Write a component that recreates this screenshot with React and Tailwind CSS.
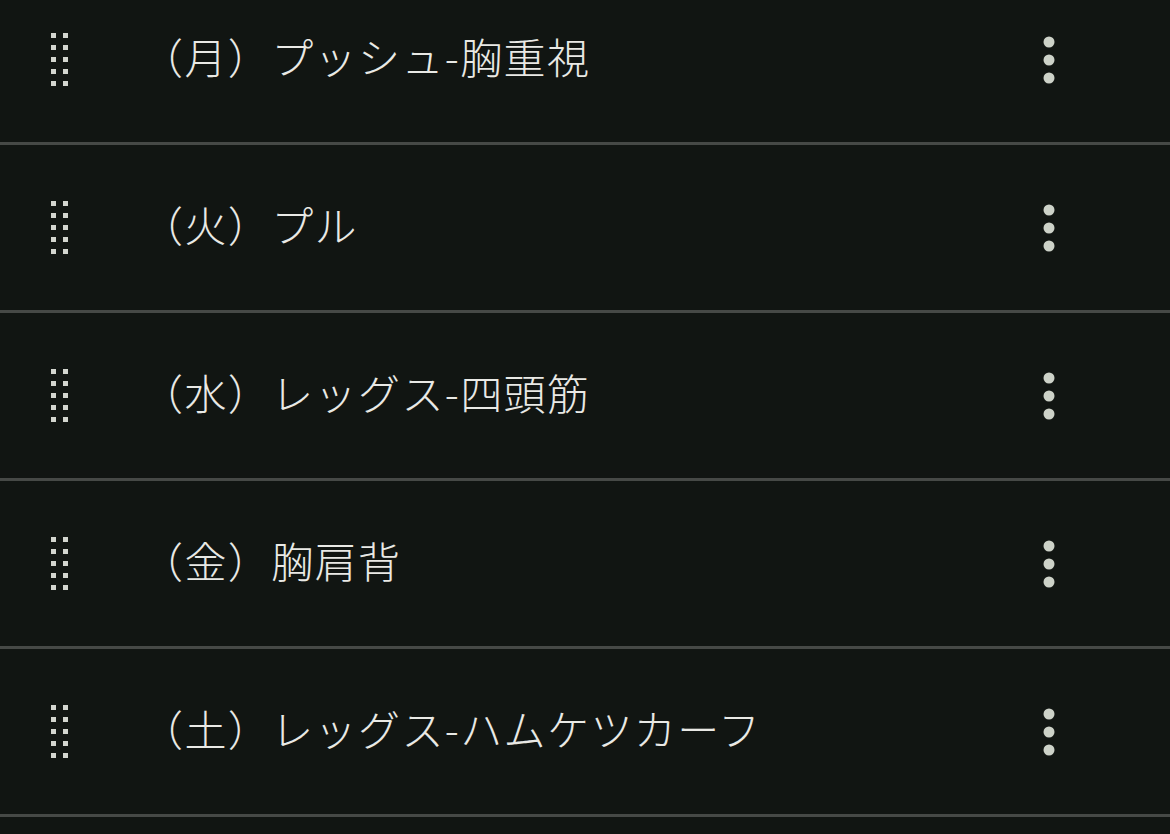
import React from "react";

const routines = [
  "（月）プッシュ-胸重視",
  "（火）プル",
  "（水）レッグス-四頭筋",
  "（金）胸肩背",
  "（土）レッグス-ハムケツカーフ",
];

function DragHandle() {
  const dots = [];
  for (let r = 0; r < 5; r++) {
    for (let c = 0; c < 2; c++) {
      dots.push(<rect key={`${r}-${c}`} x={c * 12} y={r * 12} width="5" height="5" fill="#d3d6cf" />);
    }
  }
  return (
    <svg width="17" height="53" viewBox="0 0 17 53" className="shrink-0">
      {dots}
    </svg>
  );
}

function MoreIcon() {
  return (
    <svg width="12" height="48" viewBox="0 0 12 48" className="shrink-0">
      <circle cx="6" cy="6" r="5.5" fill="#cdd2c8" />
      <circle cx="6" cy="24" r="5.5" fill="#cdd2c8" />
      <circle cx="6" cy="42" r="5.5" fill="#cdd2c8" />
    </svg>
  );
}

export default function App() {
  return (
    <div className="h-[834px] w-full overflow-hidden bg-[#111512]">
      <ul className="-mt-[23px]">
        {routines.map((name) => (
          <li
            key={name}
            className="flex h-[168px] items-center border-b-[3px] border-[#464946] pl-[51px] pr-[115px]"
          >
            <DragHandle />
            <span
              className="ml-[73px] flex-1 pb-[8px] text-[42px] font-light leading-none tracking-[1.4px] text-[#e9e9e5]"
              style={{ fontFamily: '"Noto Sans CJK JP", "Noto Sans", sans-serif' }}
            >
              {name}
            </span>
            <MoreIcon />
          </li>
        ))}
      </ul>
    </div>
  );
}
